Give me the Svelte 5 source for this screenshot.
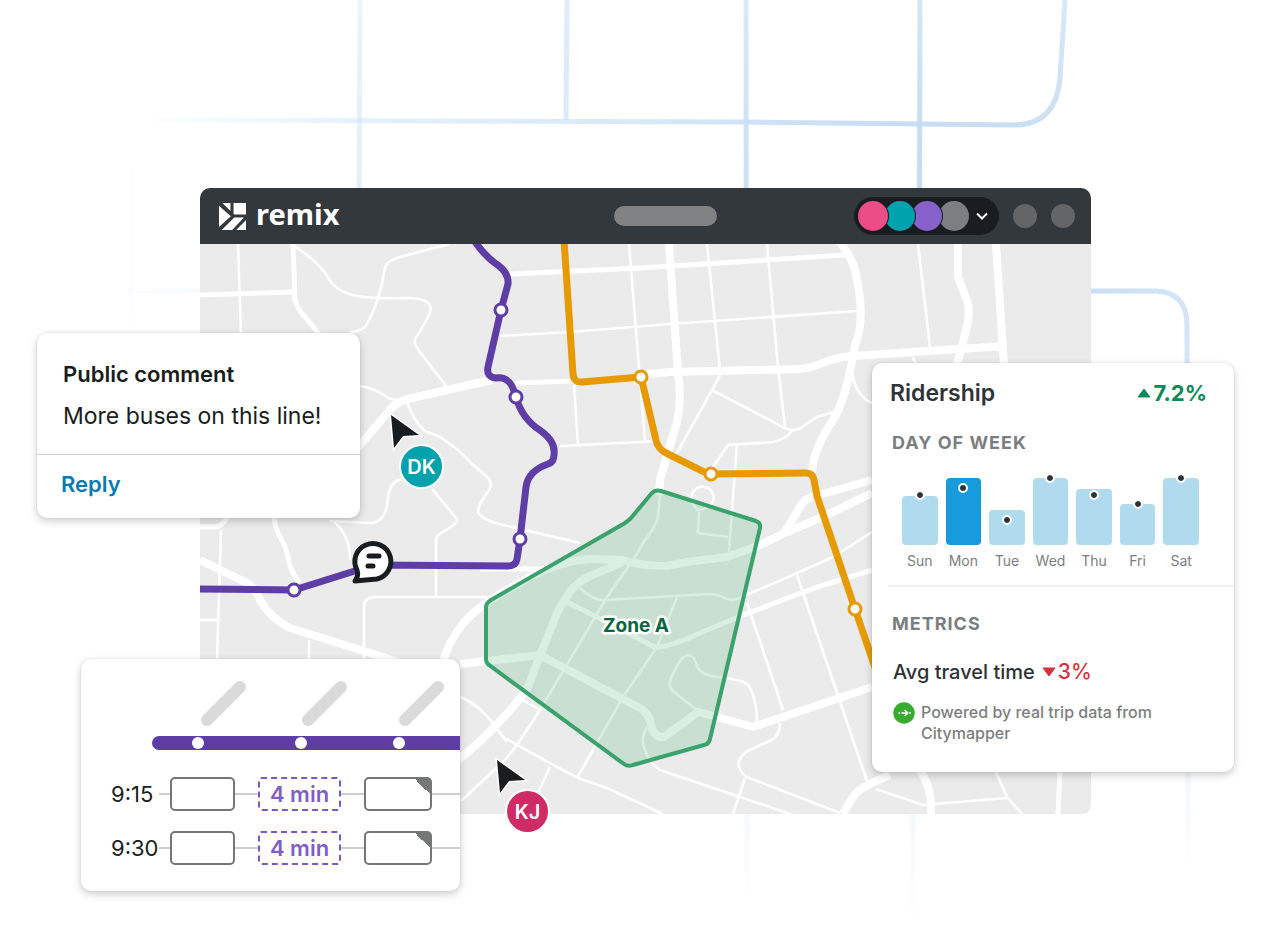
<script lang="ts">
  type Point = { x: number; y: number };

  const avatars = ['pink', 'teal', 'purple', 'grey'];

  const days = [
    { label: 'Sun', height: 49, target: 50, active: false },
    { label: 'Mon', height: 67, target: 57, active: true },
    { label: 'Tue', height: 35, target: 25, active: false },
    { label: 'Wed', height: 67, target: 67, active: false },
    { label: 'Thu', height: 56, target: 50, active: false },
    { label: 'Fri', height: 41, target: 41, active: false },
    { label: 'Sat', height: 67, target: 67, active: false }
  ];

  const trips = [
    { time: '9:15', layover: '4 min' },
    { time: '9:30', layover: '4 min' }
  ];

  const timelineStops = [46, 149, 247];
  const timelineNames = [55, 156, 253];

  // Roads, grouped by stroke weight
  const lanes = [
    'M238 244L241 335',
    'M294 246Q322 264 330 281Q336 290 352 295Q368 299 405 298C430 298 433 305 429 315Q420 332 415 339Q413 345 424 357L446 386',
    'M449 244L400 257Q386 261 385 268Q380 300 368 322Q364 332 350 332',
    'M500 336L570 332L670 324L857 311',
    'M629 244L645 441',
    'M574 385L578 445',
    'M560 446L661 441',
    'M360 386Q375 388 388 398L396 400',
    'M407 402Q413 420 425 431L440 437Q460 450 470 462L487 477Q493 482 489 490Q478 505 478 512Q480 518 495 523L580 543',
    'M402 479Q390 481 388 498Q386 523 370 523L330 521',
    'M432 489L457 519Q459 523 441 533Q436 536 436 540L436 597',
    'M334 522Q350 535 350 560',
    'M221 530L217 660',
    'M200 620L217 620',
    'M309 640V662',
    'M364 662V605Q365 597 376 597L487 597',
    'M660 495L658 517Q656 526 645 540L633 560L607 597L540 710L517 745L505 760L461 801',
    'M580 588Q592 600 603 600L640 598L708 594Q718 594 725 598Q733 602 742 597L795 574L833 557L872 532',
    'M677 597L657 647L623 697L577 778',
    'M550 767L537 795',
    'M699 512L698 533L728 537',
    'M737 443L729 552',
    'M692 501A11 11 0 1 1 713 501Q710 508 699 510Q694 508 692 501',
    'M737 680L718 677Q700 675 697 666Q694 655 688 655Q681 656 675 670Q667 683 671 689Q676 694 697 710',
    'M737 680Q750 682 753 695Q757 706 757 722',
    'M647 727Q642 735 643 743Q647 762 660 770L740 797L793 815',
    'M747 603L783 710',
    'M797 575L868 784',
    'M780 723Q780 733 774 739Q760 745 746 752Q734 762 741 771Q744 777 752 779L840 813',
    'M745 778L733 814',
    'M461 697Q480 706 492 722L503 737L557 767L578 778L607 788L650 808L662 814',
    'M492 722L507 742',
    'M523 700L540 710',
    'M876 789L923 805L1007 798',
    'M995 770L1007 797L1022 814',
    'M707 244L720 370',
    'M767 244L778 367L785 427',
    'M918 244L930 347',
    'M913 357L917 367',
    'M852 373Q856 397 874 404',
    'M720 375L712 390L673 460',
    'M712 390L783 427Q790 432 799 429L817 417L834 412',
    'M793 430Q785 440 773 442L728 445L713 467'
  ];

  const streets = [
    'M200 295L294 292',
    'M293 244L295 300Q296 305 300 311L320 335',
    'M510 274L640 268L845 255',
    'M515 383L574 381',
    'M200 527H217Q223 525 228 516',
    'M274 518Q276 532 282 540Q287 550 289 562Q292 575 300 582',
    'M480 569H545',
    'M567 602L597 617L647 643Q653 648 660 647Q675 645 700 633L743 615L817 587L872 570',
    'M1060 770L1058 814'
  ];

  const arterials = [
    'M355 451L389 411Q398 400 412 398L460 387L492 380',
    'M200 560L245 582Q256 588 260 600Q270 618 290 628L380 656L400 663',
    'M443 662Q448 642 465 621Q478 607 500 594L530 577Q560 561 590 559L623 560Q640 566 667 566L687 562L727 557L760 545L787 532L827 515L872 493',
    'M785 532L800 507Q804 499 812 497L872 480',
    'M460 664L487 661L540 655L600 687L640 708Q650 714 651 725Q654 738 664 737L698 712L710 715L753 727L783 717L872 687',
    'M623 562L590 576Q577 582 569 593Q556 612 553 624L540 655L530 682Q525 695 500 721Q480 743 458 760',
    'M843 814Q850 800 858 791Q870 783 890 775',
    'M918 768Q932 785 931 814',
    'M669 244L678 373Q682 400 677 422Q667 455 660 480L659 495',
    'M838 240Q853 258 856 275Q866 320 855 345Q846 400 833 420Q813 450 812 473',
    'M647 374L670 372L800 369Q812 368 822 363Q838 357 852 356L1005 346',
    'M958 244V277L968 303Q970 318 966 330L957 365',
    'M996 244L1004 365'
  ];

  const purpleStops: Point[] = [
    { x: 501, y: 310 },
    { x: 516, y: 397 },
    { x: 520, y: 539 },
    { x: 294, y: 590 }
  ];

  const orangeStops: Point[] = [
    { x: 641, y: 377 },
    { x: 711, y: 474 },
    { x: 855, y: 609 }
  ];

  const zone =
    'M491 600L625 523Q628 521 631 518L651 494Q655 489 661 491L756 521Q761 523 760 528L710 739Q709 744 704 745L633 765Q628 767 624 764L489 665Q486 663 486 659V607Q486 603 491 600Z';

  const cursors = [
    { initials: 'DK', color: '#00a3ad', x: 391, y: 415 },
    { initials: 'KJ', color: '#cf2c65', x: 497, y: 760 }
  ];
</script>

<main class="scene">
  <svg class="grid-lines" viewBox="0 0 1280 946" preserveAspectRatio="xMidYMin slice" aria-hidden="true">
    <defs>
      <radialGradient id="fade" gradientUnits="userSpaceOnUse" cx="0" cy="0" r="1" gradientTransform="translate(930 240) scale(830 690)">
        <stop offset="0" stop-color="#bfd9f0" />
        <stop offset="0.2" stop-color="#c6ddf2" stop-opacity="0.95" />
        <stop offset="0.4" stop-color="#cfe3f6" stop-opacity="0.8" />
        <stop offset="0.7" stop-color="#cfe3f6" stop-opacity="0.55" />
        <stop offset="1" stop-color="#deedfa" stop-opacity="0" />
      </radialGradient>
    </defs>
    <g fill="none" stroke="url(#fade)" stroke-width="5">
      <path d="M360 0L359 200" />
      <path d="M567 0L566 120" />
      <path d="M746 0L747 946" />
      <path d="M920 0L919 400L913 800V946" />
      <path d="M1065 0L1060 78Q1056 125 1014 125L746 122L150 120" />
      <path d="M90 291H1155Q1187 292 1187 325L1188 860" />
      <path d="M131 170V620" />
    </g>
  </svg>

  <section class="window">
    <header class="topbar">
      <a class="brand" href="/">
        <svg viewBox="0 0 80 80" width="27" height="27" aria-hidden="true">
          <path fill="#fff" d="M10 0H34V24ZM43 0H80V34H45L43 32ZM0 8L35 39L0 71ZM8 80L45 43H74L39 80ZM80 50V80H51Z" />
        </svg>
        <span>remix</span>
      </a>
      <div class="search"></div>
      <button class="people" aria-label="Collaborators">
        {#each avatars as avatar}
          <span class="avatar {avatar}"></span>
        {/each}
        <svg viewBox="0 0 14 14" width="14" height="14" aria-hidden="true">
          <path d="M2 4.5L7 9.5L12 4.5" fill="none" stroke="#fff" stroke-width="2" />
        </svg>
      </button>
      <span class="round"></span>
      <span class="round"></span>
    </header>

    <svg class="map" viewBox="200 244 891 570" role="img" aria-label="Transit map">
      <defs>
        <clipPath id="land">
          <path d="M200 244H1091V804Q1091 814 1081 814H200Z" />
        </clipPath>
      </defs>
      <g clip-path="url(#land)" fill="none">
        <rect x="200" y="244" width="891" height="570" fill="#ebebeb" />
        <g stroke="#fff" stroke-width="2.6">
          {#each lanes as d}<path {d} />{/each}
        </g>
        <g stroke="#fff" stroke-width="5">
          {#each streets as d}<path {d} />{/each}
        </g>
        <g stroke="#fff" stroke-width="8" stroke-linejoin="round">
          {#each arterials as d}<path {d} />{/each}
        </g>

        <path d={zone} fill="#3caf6e" fill-opacity="0.2" />
        <path d={zone} stroke="#3aa26c" stroke-width="4" />

        <path
          d="M474 240Q484 256 499 266Q509 274 508 284L501 310L488 367Q486 377 496 378C508 376 513 385 516 397C520 412 530 424 541 431C552 439 555 448 554 455Q554 462 548 464Q528 471 526 487L520 539L517 559Q516 566 508 566L374 565L294 590L200 589"
          stroke="#5f3da6" stroke-width="7"
        />
        <path
          d="M564 240L573 374Q574 383 582 382L641 377L656 440Q658 449 666 453L704 472L711 474L806 473Q813 473 814 480L817 496L855 609L880 682"
          stroke="#e69a00" stroke-width="7"
        />
      </g>

      <g fill="#fff" stroke="#5f3da6" stroke-width="3">
        {#each purpleStops as stop}<circle cx={stop.x} cy={stop.y} r="6" />{/each}
      </g>
      <g fill="#fff" stroke="#e69a00" stroke-width="3">
        {#each orangeStops as stop}<circle cx={stop.x} cy={stop.y} r="6" />{/each}
      </g>

      <text class="zone-label" x="636" y="632">Zone A</text>

      <!-- comment pin on the purple route -->
      <path
        d="M355 581Q359 576 357 570A18 18 0 1 1 377 579Q365 580 355 581Z"
        fill="#fff" stroke="#191d20" stroke-width="5" stroke-linejoin="round"
      />
      <path d="M369 556H379M368 566H373" stroke="#191d20" stroke-width="5" stroke-linecap="round" />

      {#each cursors as cursor}
        <g transform="translate({cursor.x} {cursor.y})">
          <path d="M0 0L28 20L12 21L3 33Z" fill="#191d20" stroke="#fff" stroke-width="3" paint-order="stroke" />
          <circle cx="30.5" cy="51.5" r="21.5" fill={cursor.color} stroke="#fff" stroke-width="2" />
          <text class="initials" x="30.5" y="59">{cursor.initials}</text>
        </g>
      {/each}
    </svg>
  </section>

  <article class="card comment">
    <div class="comment-body">
      <h2>Public comment</h2>
      <p>More buses on this line!</p>
    </div>
    <div class="comment-footer">
      <button class="reply">Reply</button>
    </div>
  </article>

  <article class="card schedule">
    <svg class="timeline" viewBox="0 0 308 72" width="308" height="72" aria-hidden="true">
      <path d="M7 63H320" stroke="#5f3da6" stroke-width="14" stroke-linecap="round" />
      {#each timelineNames as x}
        <path d="M{x} 40L{x + 33} 7" stroke="#dadada" stroke-width="12" stroke-linecap="round" />
      {/each}
      {#each timelineStops as x}
        <circle cx={x} cy="63" r="6" fill="#fff" />
      {/each}
    </svg>
    {#each trips as trip}
      <div class="trip">
        <time>{trip.time}</time>
        <span class="link first"></span>
        <span class="block"></span>
        <span class="link"></span>
        <span class="layover">{trip.layover}</span>
        <span class="link"></span>
        <span class="block folded"></span>
        <span class="link last"></span>
      </div>
    {/each}
  </article>

  <article class="card ridership">
    <div class="ridership-head">
      <h2>Ridership</h2>
      <span class="delta up">
        <svg viewBox="0 0 14 10" width="14" height="10" aria-hidden="true"><path d="M7 1L13 9H1Z" fill="#0e8a5a" stroke="#0e8a5a" stroke-linejoin="round" /></svg>
        7.2%
      </span>
    </div>
    <h3>DAY OF WEEK</h3>
    <div class="chart">
      {#each days as day}
        <div class="day">
          <div class="plot">
            <div class="bar" class:active={day.active} style="height: {day.height}px"></div>
            <span class="dot" style="bottom: {day.target}px"></span>
          </div>
          <span class="day-label">{day.label}</span>
        </div>
      {/each}
    </div>
    <div class="metrics">
      <h3>METRICS</h3>
      <div class="metric">
        <span>Avg travel time</span>
        <span class="delta down">
          <svg viewBox="0 0 14 10" width="14" height="10" aria-hidden="true"><path d="M7 9L13 1H1Z" fill="#d6333c" stroke="#d6333c" stroke-linejoin="round" /></svg>
          3%
        </span>
      </div>
      <div class="source">
        <svg viewBox="0 0 22 22" width="22" height="22" aria-hidden="true">
          <circle cx="11" cy="11" r="10.7" fill="#37ab2e" />
          <path d="M8.5 11H14.5M11.7 8L14.7 11L11.7 14" fill="none" stroke="#fff" stroke-width="1.6" />
          <circle cx="6.3" cy="11" r="0.9" fill="#fff" />
          <circle cx="17" cy="11" r="0.9" fill="#fff" />
        </svg>
        <p>Powered by real trip data from Citymapper</p>
      </div>
    </div>
  </article>
</main>

<style>
  :global(body) {
    background: #fff;
  }

  .scene {
    position: relative;
    overflow: hidden;
    box-sizing: border-box;
    min-height: 100vh;
    padding: 188px 189px 132px 200px;
    font-family: Inter, 'Liberation Sans', sans-serif;
    color: #191d20;
  }

  h2,
  h3,
  p {
    margin: 0;
  }

  button {
    border: none;
    padding: 0;
    font: inherit;
    cursor: pointer;
  }

  .grid-lines {
    position: absolute;
    inset: 0;
    width: 100%;
    height: 100%;
  }

  .window {
    position: relative;
  }

  .topbar {
    display: flex;
    align-items: center;
    box-sizing: border-box;
    height: 56px;
    padding: 0 16px 0 19px;
    border-radius: 10px 10px 0 0;
    background: #33383d;
  }

  .brand {
    display: flex;
    align-items: center;
    gap: 10px;
    color: #fff;
    font-family: 'Noto Sans', sans-serif;
    font-size: 29px;
    font-weight: 700;
    line-height: 32px;
    text-decoration: none;
  }

  .brand span {
    margin-bottom: 4px;
  }

  .search {
    width: 103px;
    height: 20px;
    margin-left: auto;
    margin-right: 137px;
    border-radius: 10px;
    background: #808284;
  }

  .people {
    display: flex;
    align-items: center;
    box-sizing: border-box;
    width: 145px;
    height: 38px;
    padding: 0 4px;
    border-radius: 19px;
    background: #191d20;
  }

  .people svg {
    margin-left: 9px;
  }

  .avatar {
    position: relative;
    width: 30px;
    height: 30px;
    margin-right: -3px;
    border-radius: 50%;
    box-shadow: 0 0 0 1px #191d20;
  }

  .avatar.pink { background: #ec4d86; z-index: 4; }
  .avatar.teal { background: #00a3ad; z-index: 3; }
  .avatar.purple { background: #8561c9; z-index: 2; }
  .avatar.grey { background: #7b7f82; z-index: 1; }

  .round {
    width: 24px;
    height: 24px;
    margin-left: 14px;
    border-radius: 50%;
    background: #646566;
  }

  .map {
    display: block;
    width: 100%;
    height: auto;
    overflow: visible;
  }

  .zone-label {
    font-size: 19px;
    font-weight: 700;
    text-anchor: middle;
    fill: #0a6640;
    stroke: #fff;
    stroke-width: 5px;
    stroke-linejoin: round;
    paint-order: stroke;
  }

  .initials {
    font-size: 20px;
    font-weight: 600;
    text-anchor: middle;
    fill: #fff;
  }

  .card {
    position: absolute;
    border-radius: 10px;
    background: #fff;
    box-shadow: 0 3px 8px rgba(0, 0, 0, 0.2), 0 0 2px rgba(0, 0, 0, 0.12);
    overflow: hidden;
  }

  .comment {
    top: 333px;
    left: 37px;
    width: 323px;
  }

  .comment-body {
    padding: 25px 26px 22px;
    border-bottom: 1px solid #cfd0d1;
  }

  .comment h2 {
    font-size: 22px;
    font-weight: 600;
    line-height: 32px;
  }

  .comment p {
    margin-top: 10px;
    font-size: 23px;
    line-height: 32px;
    white-space: nowrap;
  }

  .comment-footer {
    padding: 13px 24px 18px;
  }

  .reply {
    background: none;
    color: #087bb5;
    font-size: 22px;
    font-weight: 600;
    line-height: 32px;
  }

  .schedule {
    top: 659px;
    left: 81px;
    width: 379px;
    padding-bottom: 26px;
  }

  .timeline {
    display: block;
    margin: 21px 0 25px auto;
  }

  .trip {
    display: flex;
    align-items: center;
    height: 34px;
    padding-left: 30px;
  }

  .trip + .trip {
    margin-top: 20px;
  }

  .trip time {
    width: 48px;
    font-size: 22px;
    white-space: nowrap;
  }

  .block {
    box-sizing: border-box;
    width: 65px;
    height: 34px;
    border: 2px solid #747776;
    border-radius: 5px;
  }

  .block.folded {
    width: 68px;
    background: linear-gradient(45deg, transparent 50%, #747776 50%) right top / 15px 15px no-repeat;
  }

  .link {
    width: 23px;
    height: 2px;
    background: #cdcecf;
  }

  .link.first {
    width: 11px;
  }

  .link.last {
    flex: 1;
  }

  .layover {
    box-sizing: border-box;
    width: 83px;
    height: 34px;
    border: 2px dashed #7a59c4;
    border-radius: 3px;
    color: #7f5fc6;
    font-size: 22px;
    font-weight: 600;
    line-height: 30px;
    text-align: center;
  }

  .ridership {
    top: 363px;
    right: 46px;
    width: 362px;
    padding-bottom: 28px;
  }

  .ridership-head {
    display: flex;
    align-items: center;
    justify-content: space-between;
    padding: 14px 27px 0 18px;
  }

  .ridership h2 {
    color: #303438;
    font-size: 23px;
    font-weight: 600;
    line-height: 32px;
  }

  .delta {
    display: flex;
    align-items: center;
    gap: 2px;
    font-size: 22px;
    line-height: 32px;
  }

  .delta.up {
    color: #0e8a5a;
    font-weight: 700;
  }

  .delta.down {
    color: #d6333c;
    font-size: 21px;
    font-weight: 500;
  }

  .ridership h3 {
    color: #7b7e80;
    font-size: 18px;
    font-weight: 700;
    line-height: 24px;
    letter-spacing: 1px;
  }

  .ridership > h3 {
    padding: 22px 20px 0;
  }

  .chart {
    display: grid;
    grid-template-columns: repeat(7, 1fr);
    gap: 8px;
    padding: 23px 35px 14px 30px;
  }

  .day {
    display: flex;
    flex-direction: column;
    align-items: center;
  }

  .plot {
    position: relative;
    display: flex;
    align-items: flex-end;
    width: 100%;
    height: 67px;
  }

  .bar {
    width: 100%;
    border-radius: 4px;
    background: #b0dbef;
  }

  .bar.active {
    background: #189bdc;
  }

  .dot {
    position: absolute;
    left: 50%;
    width: 6px;
    height: 6px;
    border: 2px solid #fff;
    border-radius: 50%;
    background: #2d3236;
    background-clip: padding-box;
    transform: translate(-50%, 50%);
  }

  .day-label {
    margin-top: 6px;
    color: #7b7e80;
    font-size: 14px;
    line-height: 20px;
  }

  .metrics {
    margin-left: 16px;
    padding: 25px 4px 0;
    border-top: 2px solid #efefef;
  }

  .metric {
    display: flex;
    align-items: center;
    gap: 7px;
    margin-top: 20px;
    padding-left: 1px;
    color: #2d3236;
    font-size: 20px;
    font-weight: 500;
    line-height: 32px;
  }

  .source {
    display: flex;
    align-items: flex-start;
    gap: 6px;
    margin-top: 14px;
    padding-left: 1px;
    color: #7b7e80;
    font-size: 16px;
    font-weight: 500;
    line-height: 21px;
  }

  .source svg {
    flex: none;
  }

  .source p {
    max-width: 250px;
  }
</style>
